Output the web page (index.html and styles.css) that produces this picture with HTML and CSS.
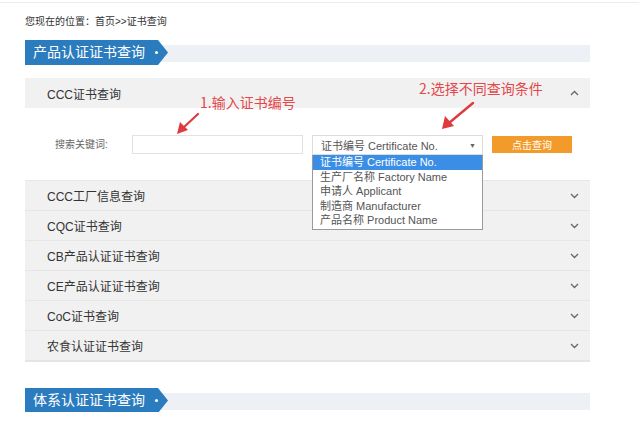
FILE: index.html
```html
<!DOCTYPE html>
<html lang="zh-CN">
<head>
    <meta charset="UTF-8">
    <meta name="viewport" content="width=device-width, initial-scale=1.0">
    <title>证书查询</title>
    <link rel="stylesheet" href="styles.css">
</head>
<body>
    <div class="page">
        <div class="crumb">您现在的位置：首页&gt;&gt;证书查询</div>

        <div class="sec-title"><span class="tab">产品认证证书查询</span></div>

        <div class="panel">
            <div class="item open">
                <div class="item-head">
                    <span>CCC证书查询</span>
                    <svg class="chev" width="9" height="6" viewBox="0 0 9 6"><polyline points="1,5 4.5,1.5 8,5" fill="none" stroke="#666" stroke-width="1.3"/></svg>
                </div>
                <div class="item-body">
                    <div class="search-row">
                        <label class="lbl">搜索关键词:</label>
                        <input type="text" class="kw">
                        <div class="sel-wrap">
                            <div class="sel">
                                <span>证书编号 Certificate No.</span>
                                <span class="tri">▼</span>
                            </div>
                            <ul class="options">
                                <li class="on">证书编号 Certificate No.</li>
                                <li>生产厂名称 Factory Name</li>
                                <li>申请人 Applicant</li>
                                <li>制造商 Manufacturer</li>
                                <li>产品名称 Product Name</li>
                            </ul>
                        </div>
                        <button class="btn">点击查询</button>
                    </div>
                </div>
            </div>
            <div class="item"><div class="item-head"><span>CCC工厂信息查询</span><svg class="chev" width="9" height="6" viewBox="0 0 9 6"><polyline points="1,1 4.5,4.5 8,1" fill="none" stroke="#666" stroke-width="1.3"/></svg></div></div>
            <div class="item"><div class="item-head"><span>CQC证书查询</span><svg class="chev" width="9" height="6" viewBox="0 0 9 6"><polyline points="1,1 4.5,4.5 8,1" fill="none" stroke="#666" stroke-width="1.3"/></svg></div></div>
            <div class="item"><div class="item-head"><span>CB产品认证证书查询</span><svg class="chev" width="9" height="6" viewBox="0 0 9 6"><polyline points="1,1 4.5,4.5 8,1" fill="none" stroke="#666" stroke-width="1.3"/></svg></div></div>
            <div class="item"><div class="item-head"><span>CE产品认证证书查询</span><svg class="chev" width="9" height="6" viewBox="0 0 9 6"><polyline points="1,1 4.5,4.5 8,1" fill="none" stroke="#666" stroke-width="1.3"/></svg></div></div>
            <div class="item"><div class="item-head"><span>CoC证书查询</span><svg class="chev" width="9" height="6" viewBox="0 0 9 6"><polyline points="1,1 4.5,4.5 8,1" fill="none" stroke="#666" stroke-width="1.3"/></svg></div></div>
            <div class="item"><div class="item-head"><span>农食认证证书查询</span><svg class="chev" width="9" height="6" viewBox="0 0 9 6"><polyline points="1,1 4.5,4.5 8,1" fill="none" stroke="#666" stroke-width="1.3"/></svg></div></div>
        </div>

        <div class="sec-title second"><span class="tab">体系认证证书查询</span></div>

        <!-- annotations drawn over the screenshot -->
        <div class="note note1">1.输入证书编号</div>
        <div class="note note2">2.选择不同查询条件</div>
        <svg class="arrows" width="639" height="422" viewBox="0 0 639 422">
            <line x1="198" y1="114" x2="183" y2="128" stroke="#e03a3e" stroke-width="2.2" stroke-linecap="round"/>
            <polygon points="177,134 180,122 188,130" fill="#e03a3e"/>
            <line x1="473" y1="103" x2="449" y2="123" stroke="#e03a3e" stroke-width="2.4" stroke-linecap="round"/>
            <polygon points="442,129 445,116 454,126" fill="#e03a3e"/>
        </svg>
    </div>
</body>
</html>
```

FILE: styles.css
```css
body {
    margin: 0;
    padding: 0;
    background-color: #fff;
    font-family: "Liberation Sans", Arial, "Noto Sans CJK SC", sans-serif;
    color: #333;
}

.page {
    position: relative;
    width: 639px;
    height: 410px;
    overflow: hidden;
    padding: 0 49px 0 25px;
    box-sizing: border-box;
    border-top: 1px solid #ececec;
    margin-top: 2px;
}

.crumb {
    font-size: 10px;
    line-height: 14px;
    padding-top: 12px;
    color: #333;
}

.sec-title {
    margin-top: 11px;
    height: 25px;
    background: linear-gradient(#fff 5px, #edf1f6 5px, #edf1f6 22px, #fff 22px);
}

.sec-title.second {
    margin-top: 26px;
}

.tab {
    position: relative;
    display: inline-block;
    width: 143px;
    height: 25px;
    line-height: 25px;
    padding-left: 8px;
    box-sizing: border-box;
    background-color: #2b7bbf;
    color: #fff;
    font-size: 14px;
    clip-path: polygon(0 0, 133px 0, 143px 50%, 133px 100%, 0 100%);
}

.tab::after {
    content: "";
    position: absolute;
    left: 130px;
    top: 11px;
    width: 3px;
    height: 3px;
    border-radius: 50%;
    background-color: #fff;
}

.panel {
    margin-top: 13px;
    border-bottom: 2px solid #e4e4e4;
}

.item-head {
    display: flex;
    align-items: center;
    justify-content: space-between;
    height: 30px;
    padding: 0 11px 0 22px;
    background-color: #f1f1f1;
    border-top: 1px solid #e6e6e6;
    box-sizing: border-box;
    font-size: 12px;
    color: #333;
}

.item:first-child .item-head {
    border-top: none;
}

.item-body {
    height: 72px;
    background-color: #fff;
    padding-top: 27px;
    box-sizing: border-box;
}

.search-row {
    display: flex;
    align-items: flex-start;
    padding-left: 30px;
}

.lbl {
    width: 77px;
    font-size: 10px;
    line-height: 19px;
    color: #666;
}

.kw {
    width: 171px;
    height: 19px;
    margin: 0;
    border: 1px solid #e2e2e2;
    box-sizing: border-box;
}

.sel-wrap {
    position: relative;
    margin-left: 9px;
}

.sel {
    display: flex;
    justify-content: space-between;
    align-items: center;
    width: 171px;
    height: 20px;
    padding: 0 6px 0 8px;
    border: 1px solid #dcdcdc;
    box-sizing: border-box;
    font-size: 11px;
    color: #555;
}

.tri {
    font-size: 7px;
    color: #666;
}

.options {
    position: absolute;
    left: 0;
    top: 20px;
    width: 171px;
    margin: 0;
    padding: 0 0 1px;
    list-style: none;
    background-color: #fff;
    border: 1px solid #9a9a9a;
    border-top: none;
    box-sizing: border-box;
    font-size: 11px;
    color: #555;
    z-index: 2;
}

.options li {
    height: 14.5px;
    line-height: 14.5px;
    padding-left: 7px;
}

.options li.on {
    background-color: #3a8ee6;
    color: #fff;
}

.btn {
    margin: 1px 0 0 9px;
    width: 80px;
    height: 17px;
    padding: 0;
    border: none;
    background-color: #f39b2a;
    color: #fff;
    font-family: "Noto Sans CJK SC", sans-serif;
    font-size: 10px;
}

.note {
    position: absolute;
    font-family: "Noto Sans CJK SC", sans-serif;
    font-size: 14px;
    color: #e4474c;
    white-space: nowrap;
}

.note1 {
    left: 200px;
    top: 89px;
}

.note2 {
    left: 419px;
    top: 75px;
}

.arrows {
    position: absolute;
    left: 0;
    top: -3px;
    pointer-events: none;
    z-index: 3;
}
```
